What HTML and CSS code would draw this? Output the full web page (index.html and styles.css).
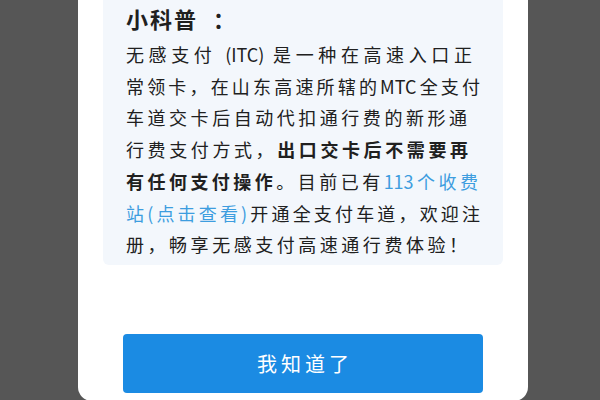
FILE: index.html
```html
<!DOCTYPE html>
<html lang="zh-CN">
<head>
<meta charset="utf-8">
<link rel="stylesheet" href="styles.css">
</head>
<body>
<div class="card">
  <div class="tip">
    <div class="tip-title">小科普<span class="colon">：</span></div>
    <div class="tip-body">
      <div class="line l1">无感支付 (ITC) 是一种在高速入口正</div>
      <div class="line l2">常领卡，在山东高速所辖的MTC全支付</div>
      <div class="line l3">车道交卡后自动代扣通行费的新形通</div>
      <div class="line l4">行费支付方式，<b>出口交卡后不需要再</b></div>
      <div class="line l5"><b>有任何支付操作</b>。目前已有<span class="link">113个收费</span></div>
      <div class="line l6"><span class="link">站(点击查看)</span>开通全支付车道，欢迎注</div>
      <div class="line l7">册，畅享无感支付高速通行费体验！</div>
    </div>
  </div>
  <div class="btn">我知道了</div>
</div>
</body>
</html>
```
FILE: styles.css
```css
html, body {
  margin: 0;
  padding: 0;
}
body {
  width: 600px;
  height: 400px;
  overflow: hidden;
  background: #565656;
  font-family: "Noto Sans CJK SC", "Noto Sans", sans-serif;
}
.card {
  margin-left: 78px;
  width: 450px;
  height: 401px;
  box-sizing: border-box;
  padding: 0 25px;
  background: #ffffff;
  border-radius: 0 0 14px 14px;
  overflow: hidden;
}
.tip {
  background: #f3f7fc;
  border-radius: 0 0 6px 6px;
  padding: 0 0 4px 23px;
  color: #202020;
}
.tip-title {
  font-size: 22px;
  font-weight: 700;
  line-height: 36px;
  margin-bottom: 3px;
  letter-spacing: 2px;
  white-space: nowrap;
}
.colon {
  margin-left: 15px;
}
.tip-body {
  font-size: 18px;
  line-height: 31.7px;
  white-space: nowrap;
}
.line {
  text-align: justify;
  text-align-last: justify;
}
.l1 { width: 346px; }
.l2 { width: 354px; }
.l3 { width: 341px; }
.l4 { width: 342px; }
.l5 { width: 352px; }
.l6 { width: 354px; }
.l7 { width: 341px; }
.tip-body b {
  font-weight: 700;
}
.link {
  color: #3d9ddf;
}
.btn {
  margin: 69px 0 0 20px;
  width: 360px;
  height: 59px;
  border-radius: 4px;
  background: #1b8be3;
  color: #ffffff;
  font-size: 20px;
  letter-spacing: 4px;
  text-indent: 4px;
  display: flex;
  align-items: center;
  justify-content: center;
}
```
